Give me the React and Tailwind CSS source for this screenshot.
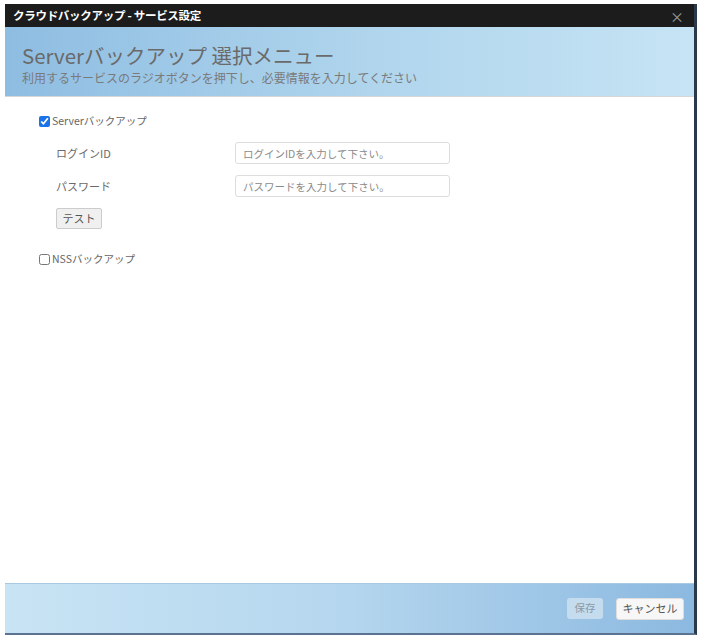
export default function App() {
  const font = { fontFamily: '"Noto Sans CJK JP", "Liberation Sans", sans-serif' };
  return (
    <div className="w-[705px] h-[643px] bg-white pt-[4px] pl-[5px]" style={font}>
      <div className="w-[692px] h-[631px] flex flex-col border-r-[3px] border-r-[#2b3a4a] border-b-[2px] border-b-[#5b7390] bg-white">
        <div className="h-[23px] bg-[#1c1c1c] flex items-center justify-between pl-[8px] pr-[10px]">
          <span className="text-white text-[11.5px] font-bold tracking-tight">クラウドバックアップ - サービス設定</span>
          <span className="text-[#9a9a9a] text-[14px] leading-none">×</span>
        </div>
        <div className="h-[70px] bg-gradient-to-r from-[#8ebde2] via-[#aed4ec] to-[#c6e4f4] pl-[17px] pt-[15px] border-b border-[#d6d6d6]">
          <div className="text-[20.5px] leading-[26px] text-[#6a6a6a]">Serverバックアップ 選択メニュー</div>
          <div className="text-[12px] leading-[18px] text-[#7a7a7a] mt-[1px]">利用するサービスのラジオボタンを押下し、必要情報を入力してください</div>
        </div>
        <div className="flex-1 pl-[34px] pt-[16px] text-[#666]">
          <label className="flex items-center gap-[2px] text-[10.5px] h-[16px]">
            <input type="checkbox" defaultChecked className="w-[11px] h-[11px] m-0 accent-[#1a73e8]" />
            <span>Serverバックアップ</span>
          </label>
          <div className="pl-[17px] pt-[13px] flex flex-col gap-[11px]">
            <div className="flex items-center h-[22px]">
              <span className="w-[179px] text-[11px] text-[#6a6a6a]">ログインID</span>
              <input
                placeholder="ログインIDを入力して下さい。"
                className="w-[215px] h-[22px] border border-[#ddd] rounded-[3px] px-[7px] text-[10.5px] placeholder-[#8a8a8a]"
              />
            </div>
            <div className="flex items-center h-[22px]">
              <span className="w-[179px] text-[11px] text-[#6a6a6a]">パスワード</span>
              <input
                placeholder="パスワードを入力して下さい。"
                className="w-[215px] h-[22px] border border-[#ddd] rounded-[3px] px-[7px] text-[10.5px] placeholder-[#8a8a8a]"
              />
            </div>
          </div>
          <div className="pl-[17px] pt-[7px]">
            <button className="w-[46px] h-[21px] bg-[#f0f0f0] border border-[#ccc] rounded-[2px] text-[11px] text-[#555] leading-none">テスト</button>
          </div>
          <label className="flex items-center gap-[2px] text-[10.5px] h-[16px] mt-[22px]">
            <input type="checkbox" className="w-[11px] h-[11px] m-0" />
            <span>NSSバックアップ</span>
          </label>
        </div>
        <div className="h-[50px] bg-gradient-to-r from-[#c8e4f4] via-[#b4d6ee] to-[#8cb9e0] border-t border-[#aac8e0] flex items-center justify-end gap-[13px] pr-[10px]">
          <button className="w-[36px] h-[21px] bg-[#c4dcee] rounded-[3px] text-[10.5px] text-[#8a9aa8] leading-none">保存</button>
          <button className="w-[68px] h-[22px] bg-[#f7f7f7] border border-[#ddd] rounded-[3px] text-[11px] text-[#555] leading-none">キャンセル</button>
        </div>
      </div>
    </div>
  );
}
